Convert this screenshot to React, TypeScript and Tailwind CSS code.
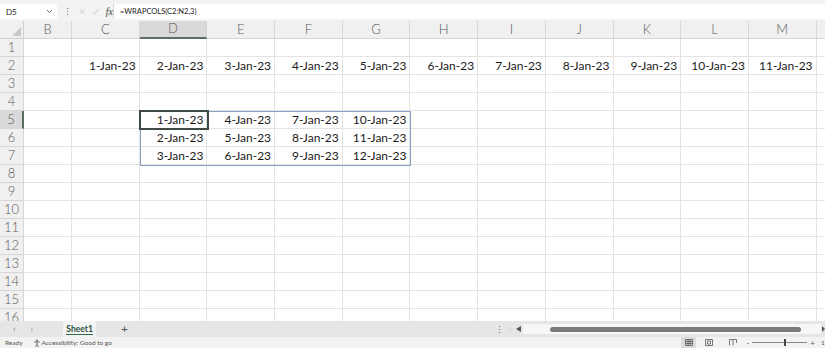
import React from "react";

const cols = ["B", "C", "D", "E", "F", "G", "H", "I", "J", "K", "L", "M", "N"];
const rows = Array.from({ length: 16 }, (_, i) => i + 1);

// values keyed by "col+row"; N is off screen so it stays empty
const values: Record<string, string> = {};
["C", "D", "E", "F", "G", "H", "I", "J", "K", "L", "M"].forEach((c, i) => {
	values[c + "2"] = `${i + 1}-Jan-23`;
});
["D", "E", "F", "G"].forEach((c, ci) => {
	[5, 6, 7].forEach((r, ri) => {
		values[c + r] = `${ci * 3 + ri + 1}-Jan-23`;
	});
});

const colWidth = (c: string) => (c === "B" ? "w-[48px]" : "w-[67.7px]");

const FormulaBar = () => (
	<div className="flex h-[21px] bg-[#f3f3f3] pt-[4px] pb-[2px]">
		<div className="flex h-[15px] w-[57px] items-center justify-between bg-white pl-[6px] pr-[4px]">
			<span className="text-[8px] text-[#222]">D5</span>
			<svg width="7" height="5" viewBox="0 0 7 5">
				<path d="M1 1 L3.5 3.5 L6 1" fill="none" stroke="#666" strokeWidth="1" />
			</svg>
		</div>
		<div className="flex h-[15px] w-[56px] items-center gap-[7px] pl-[6px]">
			<span className="text-[9px] leading-none text-[#777]">⋮</span>
			<svg width="9" height="9" viewBox="0 0 9 9">
				<path d="M1 1 L8 8 M8 1 L1 8" stroke="#bcbcbc" strokeWidth="1" />
			</svg>
			<svg width="10" height="9" viewBox="0 0 10 9">
				<path d="M1 5 L4 8 L9 1" fill="none" stroke="#bcbcbc" strokeWidth="1" />
			</svg>
			<span className="font-['Liberation_Serif',serif] text-[10px] italic leading-none text-[#444]">fx</span>
		</div>
		<div className="flex h-[15px] flex-1 items-center border-l border-[#d6d6d6] bg-white pl-[6px]">
			<span className="text-[7.5px] text-[#222]">=WRAPCOLS(C2:N2,3)</span>
		</div>
	</div>
);

const Grid = () => (
	<div className="relative h-[300px] overflow-hidden bg-white">
		{/* column header row */}
		<div className="flex h-[18px]">
			<div className="relative w-[24px] shrink-0 border-b border-r border-[#d0d0d0] bg-[#f0f0f0]">
				<svg className="absolute bottom-[2px] right-[2px]" width="9" height="9" viewBox="0 0 9 9">
					<path d="M9 0 L9 9 L0 9 Z" fill="#c9c9c9" />
				</svg>
			</div>
			{cols.map((c) => (
				<div
					key={c}
					className={`${colWidth(c)} shrink-0 flex items-center justify-center text-[13px] font-light text-[#5a5a5a] ${
						c === "D"
							? "border-b-2 border-r border-b-[#5b6e60] border-r-[#d0d0d0] bg-[#d9d9d9]"
							: "border-b border-r border-[#d6d6d6] bg-[#f0f0f0]"
					}`}
				>
					{c === "N" ? "" : c}
				</div>
			))}
		</div>
		{rows.map((r) => (
			<div key={r} className="flex h-[18px]">
				<div
					className={`w-[24px] shrink-0 flex items-center justify-center text-[13px] font-light text-[#5a5a5a] ${
						r === 5
							? "border-b border-r-2 border-b-[#d6d6d6] border-r-[#5b6e60] bg-[#d9d9d9]"
							: "border-b border-r border-[#d6d6d6] bg-[#f0f0f0]"
					}`}
				>
					{r}
				</div>
				{cols.map((c) => (
					<div
						key={c}
						className={`${colWidth(c)} shrink-0 flex items-center justify-end border-b border-r border-[#e3e3e3] pr-[3px] text-[12px] text-[#1a1a1a]`}
					>
						{values[c + r]}
					</div>
				))}
			</div>
		))}
		{/* spill range and active cell */}
		<div className="pointer-events-none absolute left-[140px] top-[90px] h-[55px] w-[271px] border border-[#8aa0c4]" />
		<div className="pointer-events-none absolute left-[139px] top-[89px] h-[20px] w-[70px] border-2 border-[#3f4a44]" />
	</div>
);

const TabBar = () => (
	<div className="flex h-[16px] items-center bg-[#e6e6e6] text-[#888]">
		<span className="ml-[13px] text-[9px]">‹</span>
		<span className="ml-[15px] text-[9px]">›</span>
		<div className="ml-[30px] flex h-full w-[33px] items-center justify-center bg-[#f3f3f3]">
			<span className="border-b border-[#2f6b45] text-[8.5px] font-bold leading-[10px] text-[#2f4f3a]">Sheet1</span>
		</div>
		<span className="ml-[25px] text-[12px] leading-none text-[#555]">+</span>
		<div className="ml-auto flex h-full items-center">
			<span className="text-[9px] leading-none text-[#666]">⋮</span>
			<span className="ml-[3px] text-[6px] leading-none text-[#aaa]">⁘</span>
			<svg className="ml-[4px]" width="5" height="6" viewBox="0 0 5 6">
				<path d="M5 0 L0 3 L5 6 Z" fill="#555" />
			</svg>
			<div className="ml-[2px] flex h-[10px] w-[298px] items-center bg-[#f7f7f7] pl-[27px] pr-[20px]">
				<div className="h-[5px] flex-1 rounded-full bg-[#7a7a7a]" />
			</div>
			<svg className="ml-[1px]" width="3" height="6" viewBox="0 0 3 6">
				<path d="M0 0 L3 3 L0 6 Z" fill="#555" />
			</svg>
		</div>
	</div>
);

const StatusBar = () => (
	<div className="flex h-[11px] items-center bg-[#f3f3f3] text-[6.5px] text-[#555]">
		<span className="ml-[5px]">Ready</span>
		<svg className="ml-[10px]" width="8" height="8" viewBox="0 0 8 8">
			<circle cx="4" cy="1.5" r="1" fill="#666" />
			<path d="M1 3 H7 M4 3 V5.5 M4 5.5 L2.5 8 M4 5.5 L5.5 8" stroke="#666" strokeWidth="0.9" fill="none" />
		</svg>
		<span className="ml-[1px]">Accessibility: Good to go</span>
		<div className="ml-auto flex h-full items-center">
			<div className="flex h-full w-[15px] items-center justify-center bg-[#dcdcdc]">
				<svg width="8" height="7" viewBox="0 0 8 7">
					<path d="M0.5 0.5 H7.5 V6.5 H0.5 Z M0.5 2.5 H7.5 M0.5 4.5 H7.5 M3 0.5 V6.5 M5 0.5 V6.5" stroke="#555" strokeWidth="0.8" fill="none" />
				</svg>
			</div>
			<svg className="ml-[9px]" width="8" height="7" viewBox="0 0 8 7">
				<path d="M0.5 0.5 H7.5 V6.5 H0.5 Z M2.5 2 H5.5 V5 H2.5 Z" stroke="#555" strokeWidth="0.8" fill="none" />
			</svg>
			<svg className="ml-[16px]" width="8" height="7" viewBox="0 0 8 7">
				<path d="M0.5 6.5 V0.5 H7.5 V4 M4 0.5 V6.5" stroke="#555" strokeWidth="0.8" fill="none" />
			</svg>
			<span className="ml-[9px] text-[8px] leading-none">-</span>
			<div className="relative ml-[3px] h-[1px] w-[55px] bg-[#888]">
				<div className="absolute left-[32px] top-[-3px] h-[7px] w-[2px] bg-[#444]" />
			</div>
			<span className="ml-[3px] text-[8px] leading-none">+</span>
			<span className="ml-[6px] w-[4px] overflow-hidden">1</span>
		</div>
	</div>
);

export default function App() {
	return (
		<div className="h-[348px] w-[825px] overflow-hidden bg-white font-['Lato',sans-serif]">
			<FormulaBar />
			<Grid />
			<TabBar />
			<StatusBar />
		</div>
	);
}
